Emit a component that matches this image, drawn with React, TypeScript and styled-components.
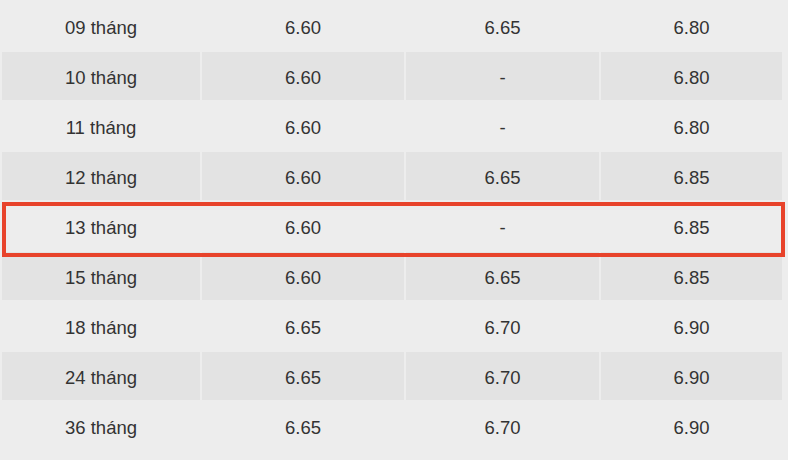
import React from "react";
import styled, { createGlobalStyle } from "styled-components";

const Global = createGlobalStyle`
  html, body { margin: 0; padding: 0; background: #ededed; }
  body { font-family: "Liberation Sans", Arial, Helvetica, sans-serif; }
`;

const Wrap = styled.div`
  position: relative;
  width: 788px;
  height: 460px;
  overflow: hidden;
  background: #ededed;
`;

const Table = styled.table`
  border-collapse: separate;
  border-spacing: 2px;
  width: 784px;
  table-layout: fixed;
`;

const Col = styled.col<{ $w: number }>`
  width: ${(p) => p.$w}px;
`;

const Row = styled.tr<{ $shade: boolean }>`
  td {
    background: ${(p) => (p.$shade ? "#e3e3e3" : "transparent")};
  }
`;

const Cell = styled.td`
  height: 48px;
  padding: 3px 0 0;
  box-sizing: border-box;
  text-align: center;
  vertical-align: middle;
  font-size: 18.5px;
  color: #333333;
`;

const Highlight = styled.div`
  position: absolute;
  left: 2px;
  top: 202px;
  width: 783px;
  height: 55px;
  box-sizing: border-box;
  border: 4px solid #e8432b;
  pointer-events: none;
`;

const widths = [198, 202, 193, 181];

const rows: [string, string, string, string][] = [
  ["09 tháng", "6.60", "6.65", "6.80"],
  ["10 tháng", "6.60", "-", "6.80"],
  ["11 tháng", "6.60", "-", "6.80"],
  ["12 tháng", "6.60", "6.65", "6.85"],
  ["13 tháng", "6.60", "-", "6.85"],
  ["15 tháng", "6.60", "6.65", "6.85"],
  ["18 tháng", "6.65", "6.70", "6.90"],
  ["24 tháng", "6.65", "6.70", "6.90"],
  ["36 tháng", "6.65", "6.70", "6.90"],
];

export default function App() {
  return (
    <Wrap>
      <Global />
      <Table>
        <colgroup>
          {widths.map((w, i) => (
            <Col key={i} $w={w} />
          ))}
        </colgroup>
        <tbody>
          {rows.map((r, i) => (
            <Row key={r[0]} $shade={i % 2 === 1}>
              {r.map((c, j) => (
                <Cell key={j}>{c}</Cell>
              ))}
            </Row>
          ))}
        </tbody>
      </Table>
      <Highlight />
    </Wrap>
  );
}
